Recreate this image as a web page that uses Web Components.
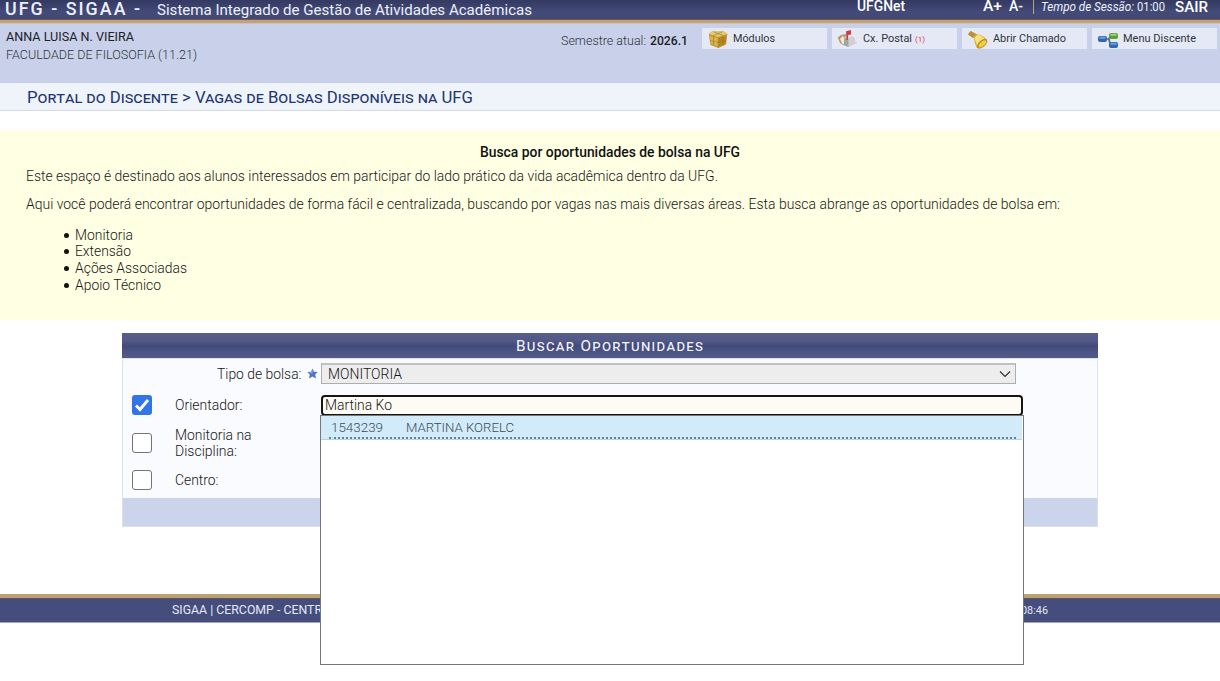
<!DOCTYPE html>
<html lang="pt-BR">
<head>
<meta charset="utf-8">
<title>SIGAA - Vagas de Bolsas</title>
<style>
html,body{margin:0;background:#fff;height:681px;overflow:hidden}
body{font-family:Roboto,"Liberation Sans",sans-serif;font-weight:300;color:#171717}
</style>
</head>
<body>
<sigaa-page></sigaa-page>
<script>
function define(name, html, setup){
  const t=document.createElement('template');t.innerHTML=html;
  customElements.define(name,class extends HTMLElement{
    constructor(){super();this.attachShadow({mode:'open'}).append(t.content.cloneNode(true));}
    connectedCallback(){if(setup)setup(this,this.shadowRoot);}
  });
}

define('sigaa-page',`
<style>:host{display:flex;flex-direction:column;width:1220px;height:681px}
search-form{margin:13px 0 0 122px}
page-footer{margin-top:67px}</style>
<top-bar></top-bar><user-bar></user-bar><bread-crumb></bread-crumb><intro-box></intro-box>
<search-form></search-form><page-footer></page-footer>`);

define('top-bar',`
<style>:host{display:flex;align-items:flex-start;box-sizing:border-box;height:24px;padding-left:5px;color:#eef0fb;
background:linear-gradient(#343a60 0,#3a416c 6px,#444b78 12px,#414873 19px,#6b5355 19px,#7a5b50 20px,#c0a078 20.5px,#c2a47b 23px,#cbbfb5 23px,#cbc3c4 24px)}
.sub{margin:0 0 0 17px}.net{margin-left:325px;color:#fff}.ap{margin-left:78px;color:#fff}.am{margin-left:7px;color:#fff}
.bar{width:1px;height:14px;background:#c0a078;margin:0 7px 0 10px}.clock{margin-left:3px}.out{margin-left:10px;color:#fff}</style>
<fit-text w="135" s="17.5" h="18" wt="500" ls="2">UFG - SIGAA -</fit-text>
<fit-text class="sub" w="375" s="15.2" h="20" wt="400">Sistema Integrado de Gestão de Atividades Acadêmicas</fit-text>
<fit-text class="net" w="48" s="14.5" h="14" wt="500">UFGNet</fit-text>
<fit-text class="ap" w="19" s="14.5" h="14" wt="500">A+</fit-text>
<fit-text class="am" w="14" s="14.5" h="14" wt="500">A-</fit-text>
<span class="bar"></span>
<fit-text w="93" s="12" h="15" wt="400" style="font-style:italic">Tempo de Sessão:</fit-text>
<fit-text class="clock" w="28" s="12" h="15" wt="400">01:00</fit-text>
<fit-text class="out" w="33" s="15" h="14" wt="500">SAIR</fit-text>`);

define('user-bar',`
<style>:host{display:flex;box-sizing:border-box;height:59px;background:#c8d1e9;padding:4px 2px 0 6px}
.who{width:555px;padding-top:0}.sem{display:flex;gap:4px;padding-top:4px;width:141px}.nav{display:flex;gap:5px}
fit-text{color:#30343c}.name,.now{color:#1c2027}</style>
<div class="who"><fit-text class="name" w="128" s="12.7" h="18" wt="400">ANNA LUISA N. VIEIRA</fit-text>
<fit-text w="191" s="12.7" h="18">FACULDADE DE FILOSOFIA (11.21)</fit-text></div>
<div class="sem"><fit-text w="85" s="13" h="18">Semestre atual:</fit-text><fit-text class="now" w="38" s="13" h="18" wt="500">2026.1</fit-text></div>
<div class="nav">
<nav-button><svg slot="icon" width="20" height="20" viewBox="0 0 20 20"><path d="M.8 5 4 2.500 10 2l6 .5L19.300 5 18 15.500 10.500 19 2.500 16z" fill="#c0962f"/><path d="M.8 5 4 2.500 10 2l6 .5L19.300 5 10 8z" fill="#e3c970"/><path d="M2 7l8 2v8.500l-7-2.800z" fill="#dab54a"/><path d="M11 9l7-2-.8 7.500L11 17.500z" fill="#b68720"/><path d="M5.500 7v9M15 7v9M2 11.500l8 2 8-2M6 3l9 3.500M14 3 5.500 6.500M10.300 8v10.500" stroke="#9a7526" fill="none" stroke-width=".6"/></svg><fit-text w="42" s="11.3" h="21" wt="400">Módulos</fit-text></nav-button>
<nav-button><svg slot="icon" width="20" height="20" viewBox="0 0 20 20" style="margin-left:-1px"><path d="M.8 8.500 4 6l5-1-1 12-5-3z" fill="#b39865"/><path d="M3 10 6 6.500l3 9.500-4-1.500z" fill="#f1ead9"/><path d="M7 9.500Q9 5 14 5q5.500.5 5.800 5.500V14L11 18.200l-4-2z" fill="#cfd0d4"/><path d="M7 10.500q2.200-3.500 4.500 0v7.500L7 16z" fill="#a2a4a7"/><path d="M12 8q2-2 4-1.500 2.500.5 3 4V13" fill="none" stroke="#f2f3f4" stroke-width="1.300"/><path d="M9 2.300 14 1v4.200l-3 .8v5H9.500z" fill="#cf403e"/></svg><fit-text w="49" s="11.3" h="21" wt="400">Cx. Postal</fit-text><fit-text w="10" s="8" h="23" wt="400" style="margin-left:3px;color:#d83a4c">(1)</fit-text></nav-button>
<nav-button><svg slot="icon" width="20" height="20" viewBox="0 0 20 20"><path d="M0 5.500 2.500 2l4 2.500 6 1.500q4 1.500 6 4.500L9 19.300Q7 16 6 9z" fill="#d7ad2e"/><path d="M0 5.500 2.500 2l5.300 2.700L5 9z" fill="#b7913c"/><path d="M6.500 9l3-3.500q5 1.500 7 4.500l-7.500 6z" fill="#f6e27c"/><ellipse cx="14.200" cy="14.700" rx="6.200" ry="3.300" transform="rotate(-43 14.200 14.700)" fill="#c48e1f"/><ellipse cx="14.500" cy="14.800" rx="4.600" ry="2.100" transform="rotate(-43 14.500 14.800)" fill="#f0cd4c"/></svg><fit-text w="73" s="11.3" h="21" wt="400">Abrir Chamado</fit-text></nav-button>
<nav-button><svg slot="icon" width="20" height="20" viewBox="0 0 20 20"><path d="M8 10h3q.5-3.500 4-3.500M11 10q.5 6 4 6" fill="none" stroke="#606970" stroke-width="1.700"/><rect x="0" y="7" width="9" height="6" rx="2" fill="#3068b2"/><rect x="1.200" y="7.800" width="6.500" height="2" rx="1" fill="#6f9fd6"/><rect x="11" y="4" width="9" height="6" rx="2" fill="#5aa13a"/><rect x="12.200" y="4.800" width="6.500" height="2" rx="1" fill="#9fd077"/><rect x="11" y="13" width="9" height="6" rx="2" fill="#3068b2"/><rect x="12.200" y="13.800" width="6.500" height="2" rx="1" fill="#6f9fd6"/></svg><fit-text w="73" s="11.3" h="21" wt="400">Menu Discente</fit-text></nav-button>
</div>`);

define('nav-button',`
<style>:host{display:flex;box-sizing:border-box;width:125px;height:21px;background:#e5e9f5;padding-left:6px}
.ic{width:25px;padding-top:1px}</style><span class="ic"><slot name="icon"></slot></span><slot></slot>`);

define('bread-crumb',`
<style>:host{display:block;box-sizing:border-box;height:28px;padding:5px 27px 0;background:#eff3fa;border-bottom:1px solid #d5dbe6;color:#1d3670}
</style><fit-text w="446" s="16" h="20" wt="400" style="font-variant:small-caps">Portal do Discente &gt; Vagas de Bolsas Disponíveis na UFG</fit-text>`);

define('intro-box',`
<style>:host{display:block;box-sizing:border-box;height:190px;margin-top:19px;padding:14px 26px 0;background:#ffffe4}
.t{margin-left:454px;color:#111}.b{margin-top:8px}
ul{list-style:none;margin:13px 0 0;padding:0 0 0 38px}li{display:flex;align-items:center;gap:6px;height:16.65px}
i{width:5px;height:5px;border-radius:50%;background:#111}</style>
<fit-text class="t" w="260" s="14.5" h="18" wt="500">Busca por oportunidades de bolsa na UFG</fit-text>
<fit-text style="margin-top:4px" w="692" s="15" h="20">Este espaço é destinado aos alunos interessados em participar do lado prático da vida acadêmica dentro da UFG.</fit-text>
<fit-text class="b" w="1034" s="15" h="20">Aqui você poderá encontrar oportunidades de forma fácil e centralizada, buscando por vagas nas mais diversas áreas. Esta busca abrange as oportunidades de bolsa em:</fit-text>
<ul><li><i></i><fit-text w="58" s="15" h="17">Monitoria</fit-text></li>
<li><i></i><fit-text w="56" s="15" h="17">Extensão</fit-text></li>
<li><i></i><fit-text w="112" s="15" h="17">Ações Associadas</fit-text></li>
<li><i></i><fit-text w="86" s="15" h="17">Apoio Técnico</fit-text></li></ul>`);

define('search-form',`
<style>:host{display:block;box-sizing:border-box;width:976px;height:194px;color:#171717}
header{height:25px;padding-left:394px;box-sizing:border-box;background:linear-gradient(#565e8b,#525987 8px,#424a7c 13px,#485080 16px,#545b89);color:#f6f7ff}
.body{box-sizing:border-box;height:140px;background:#fafbfe;border:solid #dde1ec;border-width:1px 1px 0}
.row{display:flex;align-items:center}
.act{box-sizing:border-box;height:29px;background:#cad4ea;border:1px solid #d9dfec;border-top:0}
.type{height:29px}.type>fit-text{margin-left:94px}.type svg{margin:0 3px 0 5px}
</style>
<header><fit-text w="187" s="15" h="26" wt="400" ls="1.3" style="font-variant:small-caps">Buscar Oportunidades</fit-text></header>
<div class="body">
<div class="row type"><fit-text w="84.500" s="15" h="20">Tipo de bolsa:</fit-text>
<svg width="11" height="11" viewBox="0 0 11 11"><path d="M5.500.5 7 3.700l3.700.4-2.500 2.400.8 4-3.500-2-3.500 2 .8-4L.3 4.100 4 3.700z" fill="#4e74cc"/><path d="M5.500 1.200v4.300L1.500 4.500 4.300 4z" fill="#93aee6"/></svg>
<type-select></type-select></div>
<filter-row checked style="height:33px"><fit-text w="67.500" s="15" h="16">Orientador:</fit-text><advisor-input slot="field"></advisor-input></filter-row>
<filter-row style="height:43px"><fit-text w="76.500" s="15" h="16">Monitoria na</fit-text><fit-text w="62" s="15" h="16">Disciplina:</fit-text></filter-row>
<filter-row style="height:31px"><fit-text w="43.500" s="15" h="16">Centro:</fit-text></filter-row>
</div><div class="act"></div>`);

define('type-select',`
<style>:host{display:flex;align-items:center;justify-content:space-between;box-sizing:border-box;width:695px;height:21px;background:#ededed;border:1px solid #adadad;border-top:2px solid #c2c2c2;padding:0 4px 1px 6px}</style>
<fit-text w="74" s="14.8" h="18">MONITORIA</fit-text>
<svg width="12" height="8" viewBox="0 0 12 8"><path d="M1 1.500 6 6.500 11 1.500" fill="none" stroke="#333" stroke-width="1.200"/></svg>`);

define('filter-row',`
<style>:host{display:flex;align-items:center;padding-left:9px}
.ck{box-sizing:border-box;width:20px;height:20px;border:1.300px solid #747474;border-radius:3px;background:#fff;margin-right:23px;flex:none}
:host([checked]) .ck{border:0;background:#3374e6}.ck svg{display:none}:host([checked]) .ck svg{display:block}
.lab{width:146px}</style>
<span class="ck"><svg width="20" height="20" viewBox="0 0 20 20"><path d="M4 10.500 8 14.500 16 5" fill="none" stroke="#fff" stroke-width="2.900"/></svg></span><div class="lab"><slot></slot></div><slot name="field"></slot>`);

define('advisor-input',`
<style>:host{display:block;position:relative;width:702px;height:21px;margin-top:2px}
.in{box-sizing:border-box;height:21px;background:#fdfbf4;border:2px solid #151515;border-radius:4px;padding-left:2px}
suggest-list{position:absolute;left:-1px;top:20px;z-index:5}</style>
<div class="in"><fit-text w="67" s="14.8" h="17">Martina Ko</fit-text></div><suggest-list></suggest-list>`);

define('suggest-list',`
<style>:host{display:block;box-sizing:border-box;width:704px;height:250px;background:#fff;border:1px solid #777;padding-right:1px}
.hit{box-sizing:border-box;height:24px;background:#d2ebfb;border-bottom:1px solid #b9d3e0;padding:0 6px 0 8px}
.line{box-sizing:border-box;display:flex;gap:22.5px;height:23px;border-bottom:2px dotted #688291;padding-left:2px;color:#3e4c56}</style>
<div class="hit"><div class="line"><fit-text w="52" s="13" h="23">1543239</fit-text><fit-text w="108" s="13" h="23">MARTINA KORELC</fit-text></div></div>`);

define('page-footer',`
<style>:host{display:flex;justify-content:space-between;box-sizing:border-box;height:29px;padding:6px 172px 0;color:#e5e8fa;
background:linear-gradient(#bca277 0,#b9a074 3.500px,#715957 4px,#5b4b5c 5px,#454d7c 5px,#454d7c 28px,#a2a6bc 28px)}</style>
<fit-text w="150" s="12.500" h="20" wt="400">SIGAA | CERCOMP - CENTR</fit-text>
<fit-text w="27" s="11" h="21" wt="400">08:46</fit-text>`);

/* A single text run stretched or condensed to a given width. */
define('fit-text',`<style>:host{display:block;flex:none;white-space:nowrap}span{display:inline-block;vertical-align:top;transform-origin:0 50%}</style><span><slot></slot></span>`,(el,root)=>{
  const g=k=>el.getAttribute(k),s=root.querySelector('span');
  el.style.width=g('w')+'px';el.style.height=g('h')+'px';el.style.lineHeight=g('h')+'px';
  el.style.fontSize=g('s')+'px';if(g('wt'))el.style.fontWeight=g('wt');
  const ls=+g('ls')||0;if(ls)s.style.letterSpacing=ls+'px';
  s.style.transform='scaleX('+(+g('w')/(s.getBoundingClientRect().width-ls))+')';
});
</script>
</body>
</html>
